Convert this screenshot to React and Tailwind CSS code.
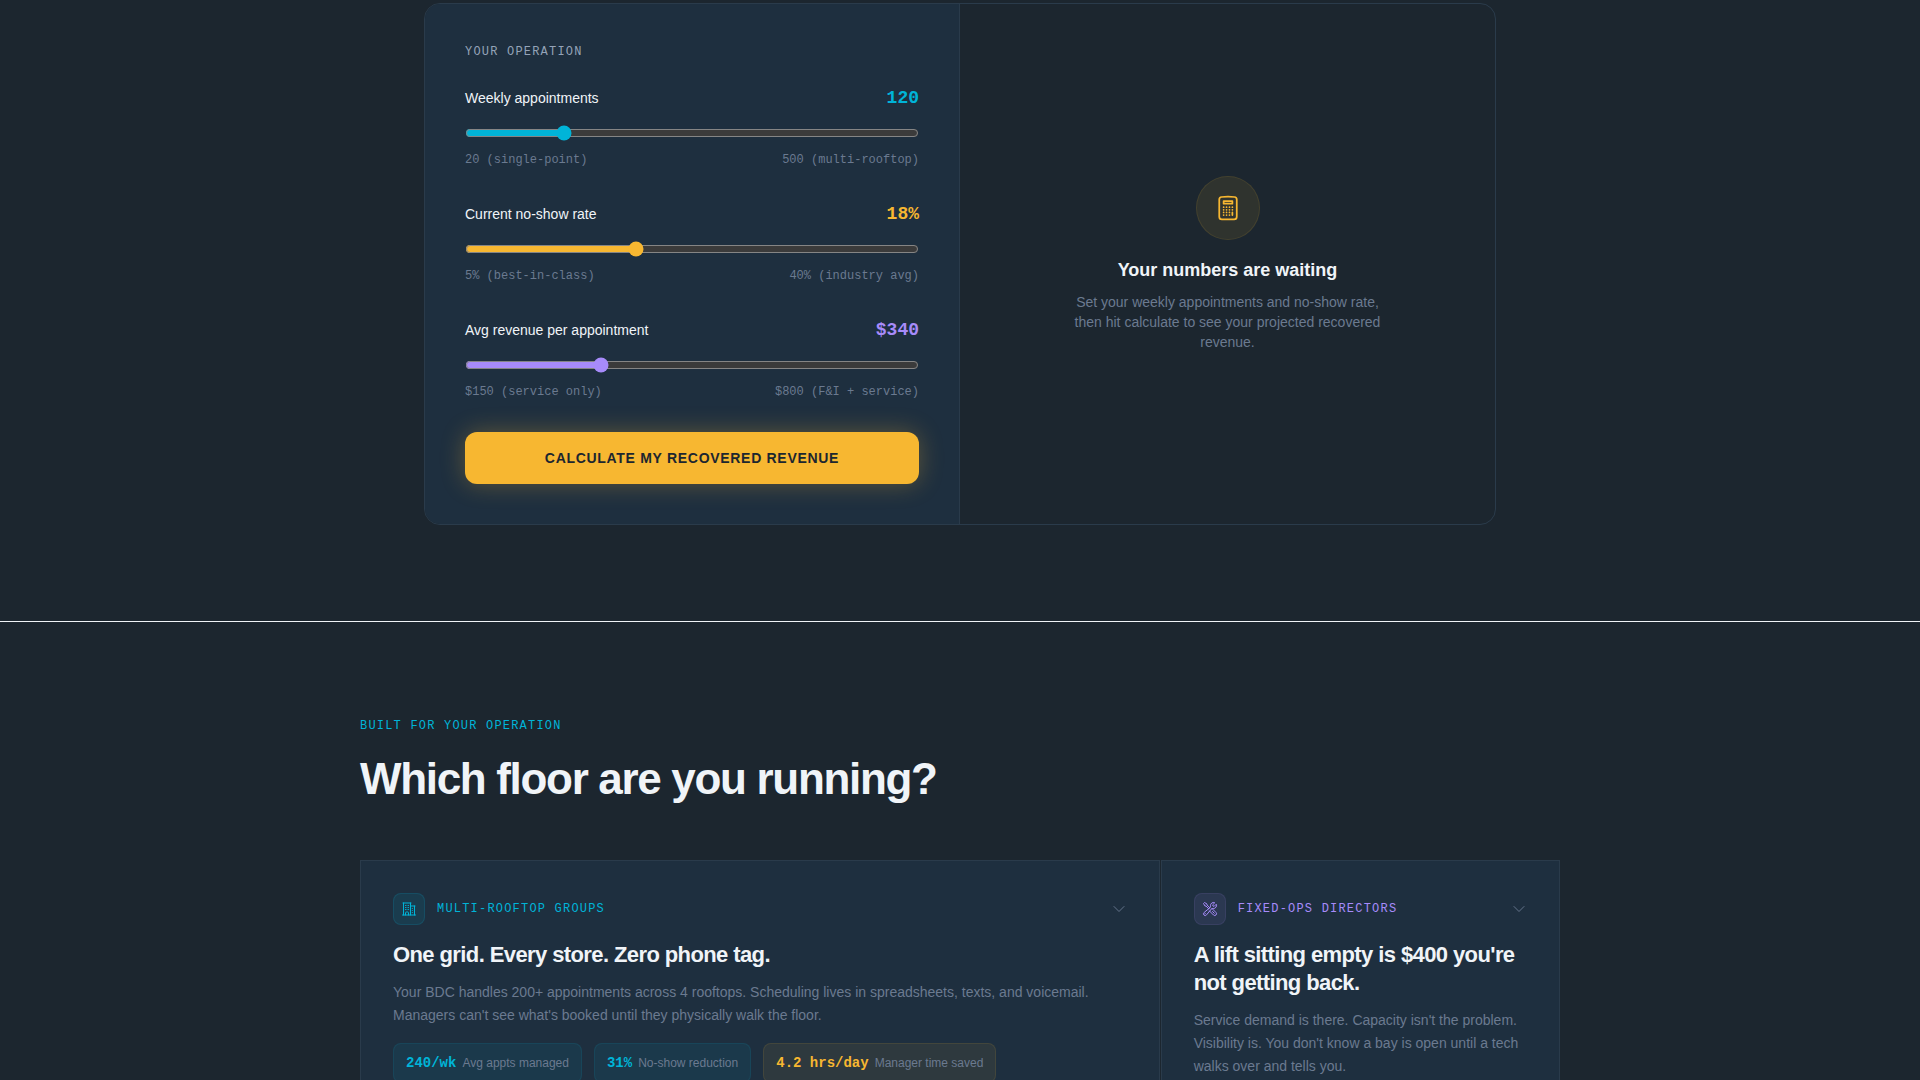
import React, { useState } from 'react';
import {
  HiOutlineBuildingOffice2,
  HiOutlineCalculator,
  HiOutlineChevronDown,
  HiOutlineWrenchScrewdriver,
} from 'react-icons/hi2';

const sliders = [
  {
    id: 'appointments',
    label: 'Weekly appointments',
    min: 20,
    max: 500,
    step: 5,
    minLabel: '20 (single-point)',
    maxLabel: '500 (multi-rooftop)',
    format: (v) => `${v}`,
    textClass: 'text-[#00b4d8]',
    accentClass: 'accent-[#00b4d8]',
  },
  {
    id: 'noShow',
    label: 'Current no-show rate',
    min: 5,
    max: 40,
    step: 1,
    minLabel: '5% (best-in-class)',
    maxLabel: '40% (industry avg)',
    format: (v) => `${v}%`,
    textClass: 'text-[#f7b731]',
    accentClass: 'accent-[#f7b731]',
  },
  {
    id: 'revenue',
    label: 'Avg revenue per appointment',
    min: 150,
    max: 800,
    step: 10,
    minLabel: '$150 (service only)',
    maxLabel: '$800 (F&I + service)',
    format: (v) => `$${v}`,
    textClass: 'text-[#a78bfa]',
    accentClass: 'accent-[#a78bfa]',
  },
];

const segments = [
  {
    name: 'Multi-Rooftop Groups',
    title: 'One grid. Every store. Zero phone tag.',
    text: "Your BDC handles 200+ appointments across 4 rooftops. Scheduling lives in spreadsheets, texts, and voicemail. Managers can't see what's booked until they physically walk the floor.",
    icon: HiOutlineBuildingOffice2,
    spanClass: 'lg:col-span-2',
    textClass: 'text-[#00b4d8]',
    badgeClass: 'bg-[#00b4d8]/10 border-[#00b4d8]/15 text-[#00b4d8]',
    stats: [
      { value: '240/wk', label: 'Avg appts managed', tone: 'cyan' },
      { value: '31%', label: 'No-show reduction', tone: 'cyan' },
      { value: '4.2 hrs/day', label: 'Manager time saved', tone: 'amber' },
    ],
  },
  {
    name: 'Fixed-Ops Directors',
    title: "A lift sitting empty is $400 you're not getting back.",
    text: "Service demand is there. Capacity isn't the problem. Visibility is. You don't know a bay is open until a tech walks over and tells you.",
    icon: HiOutlineWrenchScrewdriver,
    spanClass: '',
    textClass: 'text-[#a78bfa]',
    badgeClass: 'bg-[#a78bfa]/10 border-[#a78bfa]/10 text-[#a78bfa]',
    stats: [],
  },
];

const pillTones = {
  cyan: 'bg-[#00b4d8]/8 border-[#00b4d8]/10',
  amber: 'bg-[#f7b731]/8 border-[#f7b731]/10',
};

const valueTones = {
  cyan: 'text-[#00b4d8]',
  amber: 'text-[#f7b731]',
};

const SliderField = ({ field, value, onChange }) => (
  <div>
    <div className="flex items-center justify-between">
      <label htmlFor={field.id} className="text-sm text-[#f0f4f8]">
        {field.label}
      </label>
      <output
        htmlFor={field.id}
        className={`font-['Liberation_Mono',monospace] text-lg font-bold ${field.textClass}`}
      >
        {field.format(value)}
      </output>
    </div>
    <input
      type="range"
      id={field.id}
      name={field.id}
      min={field.min}
      max={field.max}
      step={field.step}
      value={value}
      onChange={onChange}
      className={`block w-full h-[18px] mt-3 mb-2.5 cursor-pointer scheme-dark ${field.accentClass}`}
    />
    <div className="flex justify-between font-['Liberation_Mono',monospace] text-xs text-[#6b7a90]">
      <span>{field.minLabel}</span>
      <span>{field.maxLabel}</span>
    </div>
  </div>
);

const Calculator = () => {
  const [values, setValues] = useState({ appointments: 120, noShow: 18, revenue: 340 });

  const handleChange = (e) => {
    const { name, value } = e.target;
    setValues({ ...values, [name]: Number(value) });
  };

  return (
    <section className="border-b border-[#f0f4f8] pb-24">
      <div className="max-w-6xl mx-auto px-10">
        <div className="grid md:grid-cols-2 rounded-2xl border border-[#2a3b4b] overflow-hidden">
          <form
            className="bg-[#1e2f3f] border-r border-[#2a3b4b] p-10"
            onSubmit={(e) => e.preventDefault()}
          >
            <p className="font-['Liberation_Mono',monospace] text-xs tracking-widest uppercase text-[#94a3b8] mb-6">
              Your operation
            </p>
            <div className="flex flex-col gap-8">
              {sliders.map((field) => (
                <SliderField
                  key={field.id}
                  field={field}
                  value={values[field.id]}
                  onChange={handleChange}
                />
              ))}
              <button
                type="submit"
                className="w-full py-4 rounded-xl bg-[#f7b731] text-[#1c262f] text-sm font-bold tracking-wider uppercase shadow-[0_0_24px_rgba(247,183,49,0.3)] cursor-pointer"
              >
                Calculate my recovered revenue
              </button>
            </div>
          </form>
          <div className="flex flex-col items-center justify-center p-10 text-center">
            <div className="size-16 rounded-full bg-[#f7b731]/9 border border-[#f7b731]/10 flex items-center justify-center mb-4">
              <HiOutlineCalculator className="size-7 text-[#f7b731]" />
            </div>
            <h3 className="text-lg font-bold text-[#f0f4f8] mb-2">Your numbers are waiting</h3>
            <p className="text-sm text-[#6b7a90] max-w-80">
              Set your weekly appointments and no-show rate, then hit calculate to see your
              projected recovered revenue.
            </p>
          </div>
        </div>
      </div>
    </section>
  );
};

const SegmentCard = ({ segment }) => {
  const Icon = segment.icon;

  return (
    <article className={`bg-[#1e2f3f] border border-[#2a3b4b] p-8 ${segment.spanClass}`}>
      <button type="button" className="w-full flex items-center gap-3 mb-4 text-left cursor-pointer">
        <span
          className={`size-8 rounded-lg border flex items-center justify-center ${segment.badgeClass}`}
        >
          <Icon className="size-4" />
        </span>
        <span
          className={`font-['Liberation_Mono',monospace] text-xs tracking-widest uppercase ${segment.textClass}`}
        >
          {segment.name}
        </span>
        <HiOutlineChevronDown className="size-4 ml-auto text-[#64748b]" />
      </button>
      <h3 className="text-[22px] leading-7 font-bold tracking-[-0.6px] text-[#f0f4f8] mb-3">
        {segment.title}
      </h3>
      <p className="text-sm leading-[23px] text-[#6b7a90] mb-4">{segment.text}</p>
      <div className="flex flex-wrap gap-3">
        {segment.stats.map((stat) => (
          <div
            key={stat.label}
            className={`flex items-center gap-1.5 rounded-lg border px-3 py-2 ${pillTones[stat.tone]}`}
          >
            <span
              className={`font-['Liberation_Mono',monospace] text-sm leading-[22px] font-bold ${valueTones[stat.tone]}`}
            >
              {stat.value}
            </span>
            <span className="text-xs text-[#6b7a90]">{stat.label}</span>
          </div>
        ))}
      </div>
    </article>
  );
};

const Segments = () => (
  <section className="py-24 px-10">
    <div className="max-w-[1200px] mx-auto">
      <p className="font-['Liberation_Mono',monospace] text-xs tracking-widest uppercase text-[#00b4d8] mb-5">
        Built for your operation
      </p>
      <h2 className="text-[44px] leading-[50px] font-bold tracking-[-0.03em] text-[#f0f4f8] mb-14">
        Which floor are you running?
      </h2>
      <div className="grid lg:grid-cols-3 gap-px">
        {segments.map((segment) => (
          <SegmentCard key={segment.name} segment={segment} />
        ))}
      </div>
    </div>
  </section>
);

const App = () => {
  return (
    <main className="h-screen overflow-hidden bg-[#1c262f] pt-[3px] font-['Liberation_Sans',Arial,sans-serif]">
      <Calculator />
      <Segments />
    </main>
  );
};

export default App;
